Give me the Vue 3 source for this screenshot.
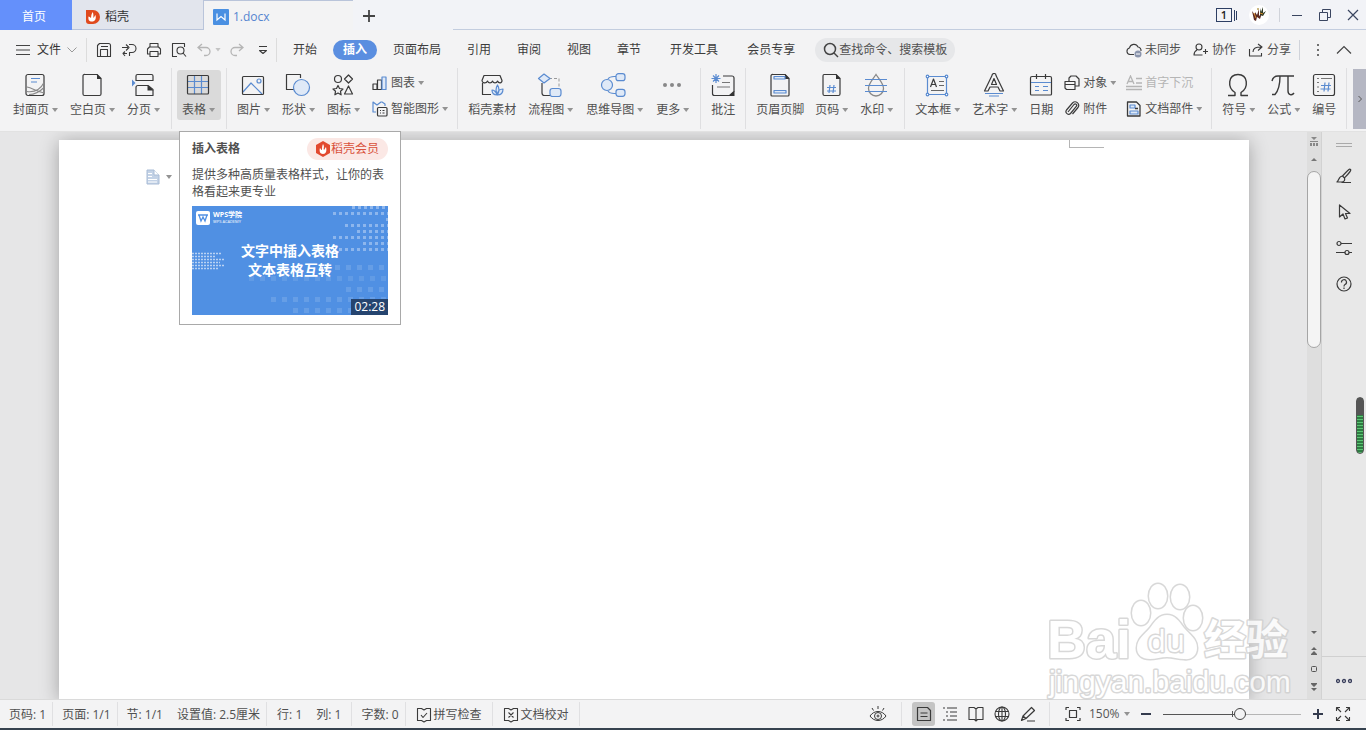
<template>
  <div class="app">
    <!-- Title bar with document tabs -->
    <header class="title-bar">
      <button class="tab tab-home">首页</button>
      <button class="tab tab-docer">
        <svg class="tab-icon" viewBox="0 0 16 16" v-html="icons.docer"></svg>
        <span>稻壳</span>
      </button>
      <button class="tab tab-doc">
        <svg class="tab-icon" viewBox="0 0 16 16" v-html="icons.writer"></svg>
        <span>1.docx</span>
      </button>
      <div class="new-tab">
        <button class="icon-btn" aria-label="新建">
          <svg width="16" height="16" viewBox="0 0 16 16"><path d="M8 2v12M2 8h12" stroke="#444" stroke-width="1.8" /></svg>
        </button>
      </div>
      <div class="window-tools">
        <svg width="22" height="16" viewBox="0 0 22 16" fill="none" stroke="#2d3e63">
          <rect x="0.5" y="1.5" width="15" height="13" />
          <path d="M18.500 3v11M20.500 4v9" />
          <text x="8" y="12" text-anchor="middle" class="count-text">1</text>
        </svg>
        <svg class="avatar" width="20" height="20" viewBox="0 0 20 20">
          <circle cx="10" cy="10" r="10" fill="#fff" />
          <path d="M3 6l3 4 0-3 2 3 2-6 0 7 3-3-2 6-3-2-1 4-2-1z" fill="#5b2c26" />
          <path d="M11 3l1 4 2-5 0 6 3-2-3 5-3-1z" fill="#2f3a24" />
          <path d="M5 8l2 5M11 8l3 1" stroke="#d88b2e" />
          <circle cx="9" cy="4" r="1" fill="#b8a05c" />
        </svg>
        <i class="divider"></i>
        <button class="icon-btn" aria-label="最小化"><svg width="12" height="12" viewBox="0 0 12 12" fill="none" stroke="#3a4560"><path d="M1 6.500h10" /></svg></button>
        <button class="icon-btn" aria-label="还原"><svg width="12" height="12" viewBox="0 0 12 12" fill="none" stroke="#3a4560"><path d="M0.500 3.500h8v8h-8zM3.500 3.500v-3h8v8h-3" /></svg></button>
        <button class="icon-btn" aria-label="关闭"><svg width="12" height="12" viewBox="0 0 12 12" fill="none" stroke="#3a4560" stroke-width="1.200"><path d="M1 1l10 10M11 1L1 11" /></svg></button>
      </div>
    </header>

    <!-- Menu row -->
    <nav class="menu-row">
      <button class="file-btn">
        <svg width="16" height="12" viewBox="0 0 16 12" stroke="#444"><path d="M1 1.500h14M1 6h14M1 10.500h14" /></svg>
        <span>文件</span>
        <svg width="10" height="6" viewBox="0 0 10 6" fill="none" stroke="#999"><path d="M0.500 0.500L5 5l4.500-4.500" /></svg>
      </button>
      <div class="quick-tools">
        <button v-for="q in quickTools" :key="q.icon" class="icon-btn" :aria-label="q.label">
          <svg class="ico16" viewBox="0 0 16 16" v-html="icons[q.icon]"></svg>
        </button>
        <button class="icon-btn undo" aria-label="撤销">
          <svg class="ico16" viewBox="0 0 16 16" v-html="icons.undo"></svg>
          <i class="caret light"></i>
        </button>
        <button class="icon-btn" aria-label="恢复">
          <svg class="ico16" viewBox="0 0 16 16" v-html="icons.redo"></svg>
        </button>
        <button class="icon-btn" aria-label="自定义快速访问工具栏">
          <svg class="ico16" viewBox="0 0 16 16" v-html="icons.custom"></svg>
        </button>
      </div>
      <div class="menu-tabs">
        <button
          v-for="m in menus"
          :key="m.name"
          class="menu-tab"
          :class="{ active: m.name === activeMenu, addon: m.addon }"
          @click="activeMenu = m.name"
        >{{ m.name }}</button>
      </div>
      <label class="search">
        <svg width="16" height="16" viewBox="0 0 16 16" fill="none" stroke="#444" stroke-width="1.500"><circle cx="7" cy="7" r="5.500" /><path d="M11 11l4 4" /></svg>
        <input type="text" placeholder="查找命令、搜索模板" aria-label="查找命令、搜索模板" />
      </label>
      <div class="menu-right">
        <div class="share-tools">
          <button v-for="s in shareTools" :key="s.label" class="share-btn">
            <svg class="ico16" viewBox="0 0 16 16" v-html="icons[s.icon]"></svg>
            <span>{{ s.label }}</span>
          </button>
        </div>
        <i class="divider tall"></i>
        <button class="icon-btn" aria-label="更多选项"><svg class="ico16" viewBox="0 0 16 16" fill="#444"><circle cx="8" cy="3" r="1" /><circle cx="8" cy="8" r="1" /><circle cx="8" cy="13" r="1" /></svg></button>
        <button class="icon-btn" aria-label="折叠功能区"><svg class="ico16" viewBox="0 0 16 16" fill="none" stroke="#444" stroke-width="1.200"><path d="M1 11.500L8 4.500l7 7" /></svg></button>
      </div>
    </nav>

    <!-- Ribbon -->
    <section class="ribbon">
      <div v-for="(group, gi) in ribbon" :key="gi" class="group" :class="{ roomy: group.roomy }">
        <template v-for="item in group.items" :key="item.label || item.rows[0].label">
          <div v-if="item.rows" class="small-col">
            <button v-for="row in item.rows" :key="row.label" class="small-btn" :disabled="row.disabled">
              <svg class="ico16" viewBox="0 0 16 16" v-html="icons[row.icon]"></svg>
              <span>{{ row.label }}</span>
              <i v-if="row.menu" class="caret"></i>
            </button>
          </div>
          <div v-else class="big-wrap">
            <button class="big-btn" :class="{ 'has-menu': item.menu, hover: item.tip }">
              <svg class="big-icon" viewBox="0 0 28 24" v-html="icons[item.icon]"></svg>
              <span class="big-label">{{ item.label }}<i v-if="item.menu" class="caret"></i></span>
            </button>
            <!-- Hover card of the table button -->
            <div v-if="item.tip" class="tip-card">
              <div class="tip-head">
                <strong>插入表格</strong>
                <span class="member">
                  <svg width="14" height="16" viewBox="0 0 14 16"><path d="M7 0l7 4v8l-7 4-7-4V4z" fill="#e2492f" /><path d="M7 3c2 3 0 4 1 6 1-1 1-2 2-3 1 4 0 7-3 7S3 10 4 7c1 1 1 2 2 2 0-2 0-4 1-6z" fill="#fff" /></svg>
                  稻壳会员
                </span>
              </div>
              <p>提供多种高质量表格样式，让你的表格看起来更专业</p>
              <div class="video">
                <svg class="video-dots" viewBox="0 0 196 109" v-html="videoDots"></svg>
                <div class="video-brand">
                  <svg width="14" height="14" viewBox="0 0 14 14"><rect width="14" height="14" rx="2" fill="#fff" /><path d="M2 4h10M3 4l2 6 2-4 2 4 2-6" fill="none" stroke="#5090e3" stroke-width="1.300" /></svg>
                  <div>
                    <b>WPS学院</b>
                    <small>WPS ACADEMY</small>
                  </div>
                </div>
                <div class="video-title">文字中插入表格<br />文本表格互转</div>
                <span class="video-time">02:28</span>
              </div>
            </div>
          </div>
        </template>
      </div>
      <button class="ribbon-next" aria-label="向右滚动">
        <svg width="6" height="8" viewBox="0 0 6 8" fill="none" stroke="#555"><path d="M1.500 1l3 3-3 3" /></svg>
      </button>
    </section>

    <!-- Workspace -->
    <main class="workspace">
      <div class="canvas">
        <div class="page">
          <button class="para-mark" aria-label="段落">
            <svg width="14" height="16" viewBox="0 0 14 16"><path d="M1 1h7l5 5v9H1z" fill="#c3d2e6" stroke="#a9bcd6" /><path d="M8 1v5h5" fill="#fff" stroke="#a9bcd6" /><path d="M2 4.500h4M2 7.500h4M2 10.500h9M2 13h9" stroke="#fff" /></svg>
            <i class="caret"></i>
          </button>
          <i class="corner"></i>
        </div>
      </div>
      <div class="scrollbar">
        <svg width="10" height="10" viewBox="0 0 10 10" fill="#888"><path d="M2 0h6L5 3zM1 6h2v3H1zM4 6h2v3H4zM7 6h2v3H7zM1 4h8v1H1z" /></svg>
        <svg width="8" height="8" viewBox="0 0 8 8" fill="#777"><path d="M1 6h6L4 3z" /></svg>
        <div class="track"><div class="thumb"></div></div>
        <div class="scroll-tools">
          <svg width="8" height="10" viewBox="0 0 8 10" fill="#666"><path d="M1 3h6L4 6z" /></svg>
          <svg width="8" height="10" viewBox="0 0 8 10" fill="#666"><path d="M1 4h6L4 1zM1 8h6L4 5zM1 8h6v1H1z" /></svg>
          <svg width="8" height="10" viewBox="0 0 8 10" fill="none" stroke="#555"><rect x="1.500" y="2.500" width="5" height="5" rx="1" /></svg>
          <svg width="8" height="10" viewBox="0 0 8 10" fill="#666"><path d="M1 2h6L4 5zM1 6h6L4 9zM1 1h6v1H1z" /></svg>
        </div>
      </div>
      <aside class="side-bar">
        <svg class="grip" width="16" height="6" viewBox="0 0 16 6" stroke="#aaa"><path d="M0 1.500h16M0 4.500h16" /></svg>
        <button v-for="s in sideTools" :key="s.icon" class="icon-btn" :aria-label="s.label">
          <svg class="ico16" viewBox="0 0 16 16" v-html="icons[s.icon]"></svg>
        </button>
        <button class="icon-btn side-more" aria-label="更多">
          <svg class="ico16" viewBox="0 0 16 16" fill="none" stroke="#3a3f5c" stroke-width="1.300"><circle cx="2" cy="8" r="1.500" /><circle cx="8" cy="8" r="1.500" /><circle cx="14" cy="8" r="1.500" /></svg>
        </button>
      </aside>
      <div class="meter"></div>
      <svg class="watermark" viewBox="0 0 250 120">
        <g class="wm">
          <ellipse cx="101" cy="34" rx="9" ry="12" />
          <ellipse cx="118" cy="17" rx="9" ry="12" />
          <ellipse cx="140" cy="18" rx="9" ry="12" />
          <ellipse cx="153" cy="39" rx="9" ry="12" />
          <path d="M127 36c8 0 12 6 17 13 6 7 13 11 13 20 0 8-6 12-13 11-6 0-11-2-17-2s-11 2-17 2c-8 0-13-4-13-11 0-9 7-13 13-20 5-7 9-13 17-13z" />
          <text x="7" y="79" class="wm-latin">Bai</text>
          <text x="107" y="73" class="wm-du">du</text>
          <text x="164" y="76" class="wm-cjk">经验</text>
          <text x="9" y="113" class="wm-url">jingyan.baidu.com</text>
        </g>
      </svg>
    </main>

    <!-- Status bar -->
    <footer class="status-bar">
      <div v-for="(cell, i) in statusCells" :key="i" class="cell" :class="{ wide: cell.wide }">
        <svg v-if="cell.icon" class="ico16" viewBox="0 0 16 16" v-html="icons[cell.icon]"></svg>
        <span v-for="t in cell.texts" :key="t">{{ t }}</span>
      </div>
      <div class="status-right">
        <button class="icon-btn eye" aria-label="护眼模式"><svg width="18" height="18" viewBox="0 0 18 18" v-html="icons.eye"></svg></button>
        <div class="views">
          <button
            v-for="v in views"
            :key="v.icon"
            class="view-btn"
            :class="{ active: v.icon === activeView }"
            :aria-label="v.label"
            @click="activeView = v.icon"
          >
            <svg class="ico16" viewBox="0 0 16 16" v-html="icons[v.icon]"></svg>
          </button>
        </div>
        <button class="icon-btn" aria-label="最佳显示比例"><svg class="ico16" viewBox="0 0 16 16" v-html="icons.fit"></svg></button>
        <label class="zoom-select">
          <select aria-label="显示比例"><option>150%</option></select>
          <i class="caret"></i>
        </label>
        <button class="icon-btn" aria-label="缩小"><svg width="12" height="12" viewBox="0 0 12 12" stroke="#333a4d" stroke-width="2"><path d="M1 6h10" /></svg></button>
        <input v-model="zoom" class="zoom-range" type="range" min="0" max="100" aria-label="缩放" />
        <button class="icon-btn" aria-label="放大"><svg width="12" height="12" viewBox="0 0 12 12" stroke="#333a4d" stroke-width="2"><path d="M1 6h10M6 1v10" /></svg></button>
        <button class="icon-btn full" aria-label="全屏显示"><svg class="ico16" viewBox="0 0 16 16" v-html="icons.full"></svg></button>
      </div>
    </footer>
  </div>
</template>

<script setup>
import { ref } from 'vue'

const activeMenu = ref('插入')
const activeView = ref('viewPage')
const zoom = ref(56)

const menus = [
  { name: '开始' },
  { name: '插入' },
  { name: '页面布局' },
  { name: '引用' },
  { name: '审阅' },
  { name: '视图' },
  { name: '章节' },
  { name: '开发工具', addon: true },
  { name: '会员专享', addon: true }
]

const quickTools = [
  { icon: 'save', label: '保存' },
  { icon: 'exportPdf', label: '输出为PDF' },
  { icon: 'print', label: '打印' },
  { icon: 'preview', label: '打印预览' }
]

const shareTools = [
  { icon: 'cloud', label: '未同步' },
  { icon: 'collab', label: '协作' },
  { icon: 'share', label: '分享' }
]

const sideTools = [
  { icon: 'brush', label: '样式' },
  { icon: 'pointer', label: '选择' },
  { icon: 'sliders', label: '属性' },
  { icon: 'help', label: '帮助' }
]

const views = [
  { icon: 'viewPage', label: '页面视图' },
  { icon: 'viewOutline', label: '大纲' },
  { icon: 'viewRead', label: '阅读版式' },
  { icon: 'viewWeb', label: 'Web版式' },
  { icon: 'viewPen', label: '写作模式' }
]

const statusCells = [
  { texts: ['页码: 1'] },
  { texts: ['页面: 1/1'] },
  { texts: ['节: 1/1', '设置值: 2.5厘米'] },
  { texts: ['行: 1', '列: 1'], wide: true },
  { texts: ['字数: 0'] },
  { icon: 'spell', texts: ['拼写检查'], wide: true },
  { icon: 'proof', texts: ['文档校对'], wide: true }
]

const ribbon = [
  {
    items: [
      { icon: 'cover', label: '封面页', menu: true },
      { icon: 'blank', label: '空白页', menu: true },
      { icon: 'pageBreak', label: '分页', menu: true }
    ]
  },
  { items: [{ icon: 'table', label: '表格', menu: true, tip: true }] },
  {
    items: [
      { icon: 'picture', label: '图片', menu: true },
      { icon: 'shapes', label: '形状', menu: true },
      { icon: 'iconSet', label: '图标', menu: true },
      {
        rows: [
          { icon: 'chart', label: '图表', menu: true },
          { icon: 'smart', label: '智能图形', menu: true }
        ]
      }
    ]
  },
  {
    roomy: true,
    items: [
      { icon: 'store', label: '稻壳素材' },
      { icon: 'flow', label: '流程图', menu: true },
      { icon: 'mind', label: '思维导图', menu: true },
      { icon: 'more', label: '更多', menu: true }
    ]
  },
  { items: [{ icon: 'comment', label: '批注' }] },
  {
    items: [
      { icon: 'headerFooter', label: '页眉页脚' },
      { icon: 'pageNo', label: '页码', menu: true },
      { icon: 'water', label: '水印', menu: true }
    ]
  },
  {
    items: [
      { icon: 'textBox', label: '文本框', menu: true },
      { icon: 'wordArt', label: '艺术字', menu: true },
      { icon: 'date', label: '日期' },
      {
        rows: [
          { icon: 'object', label: '对象', menu: true },
          { icon: 'attach', label: '附件' }
        ]
      },
      {
        rows: [
          { icon: 'dropCap', label: '首字下沉', disabled: true },
          { icon: 'parts', label: '文档部件', menu: true }
        ]
      }
    ]
  },
  {
    items: [
      { icon: 'symbol', label: '符号', menu: true },
      { icon: 'formula', label: '公式', menu: true },
      { icon: 'numbering', label: '编号' }
    ]
  }
]

// wrappers for line icons: dark strokes (d) and blue strokes (b)
const d = (s, w = 1.2) => `<g fill="none" stroke="#3a3a3a" stroke-width="${w}" stroke-linejoin="round">${s}</g>`
const b = (s, fill = 'none') => `<g fill="${fill}" stroke="#5a8bd0" stroke-width="1.2" stroke-linejoin="round">${s}</g>`
const g = s => `<g fill="none" stroke="#b5b5b5" stroke-width="1.3">${s}</g>`

const icons = {
  docer: '<path d="M1 1h7a7 7 0 0 1 0 14H4a3 3 0 0 1-3-3z" fill="#e04a1e"/><path d="M7.500 3c1.500 2 .500 4 1 6 1-1 1-2 2-3 1 4-.500 6.500-3.500 6.500S3 10.500 3.500 7.500c1 0 1.500 1 2.500 1.500 0-2 .500-4 1.500-6z" fill="#fff"/>',
  writer: '<rect width="16" height="16" rx="1" fill="#4a90e2"/><path d="M4 4.500V11l4-3.500 4 3.500V4.500" fill="none" stroke="#fff" stroke-width="1.2"/>',

  save: d('<path d="M1.500 3.500l2-2h9a2 2 0 0 1 2 2v11h-13zM4.500 14.500v-7h7v7M5 4.500h7" />', 1.1),
  exportPdf: d('<path d="M1 5.500h6M5 2.500l3 3-3 3M8 2.500h3a4 4 0 0 1 0 8H8.500V14M4 9.500l-2 2 2 2.500M2 11.500h4" />', 1.1),
  print: d('<path d="M4 5V1.500h8V5M4 12H1.500V7l2-2h9l2 2v5H12M4 9.500h8v5H4z" />', 1.1),
  preview: d('<path d="M6 14.500H1.500v-13h12V5" /><circle cx="9.500" cy="8.500" r="3.500" /><path d="M12 11l3 3.500" />', 1.1),
  undo: g('<path d="M6 2L2 5.500 6 9M2 5.500h8a4 4 0 0 1 0 8H8" />'),
  redo: g('<path d="M10 2l4 3.500L10 9M14 5.500H6a4 4 0 0 0 0 8h2" />'),
  custom: d('<path d="M5 4.500h8M5.500 8.500l3.500 3 3.500-3z" />', 1.1),

  cloud: d('<path d="M8 12.500H4a3.300 3.300 0 0 1-.500-6.500 4.500 4.500 0 0 1 8.500-1 3.500 3.500 0 0 1 3 4" />', 1.1) + '<circle cx="12" cy="12" r="3.500" fill="#8b95ad"/><path d="M10 12h4" stroke="#fff"/>',
  collab: d('<circle cx="6" cy="5" r="3" /><path d="M4 8c-2 1-3 2-3 5h8.500M12.500 7v5M10 9.500h5" />', 1.1),
  share: d('<path d="M1.500 7v7h12v-3M5 10c0-4 3-5 8-5M10 2l4 3-4 3.500" />', 1.1),

  cover: d('<rect x="5" y="1.500" width="18" height="21" rx="2" />') + b('<path d="M10 5.500h9M10 9h6" />') + '<path d="M6 14c5 1 9 4 17 6M6 18.500c8 1 14-3 17-9M8 21.500c6 0 11-3 15-7" fill="none" stroke="#888" stroke-width="1.100"/>',
  blank: d('<path d="M7 1.500h12l4 4V21a1.500 1.500 0 0 1-1.500 1.500h-15A1.500 1.500 0 0 1 5 21V3a1.500 1.500 0 0 1 2-1.500z" />') + '<path d="M19 1l4.500 5H19z" fill="#333"/>',
  pageBreak: d('<path d="M7 7.500V3a1.500 1.500 0 0 1 1.500-1.500h14A1.500 1.500 0 0 1 24 3v4.500zM7 22.500v-8a2 2 0 0 1 2-2h10l5 4v6z" />') + '<path d="M18.500 12l6 5.500h-6z" fill="#333"/><path d="M3 6.500v7l3.500-3.500z" fill="#5a8bd0"/>',
  table: b('<path d="M10.500 3v18M17.500 3v18M4 8.500h20M4 14.500h20" />') + d('<rect x="3.500" y="2.500" width="21" height="18.500" rx="1" />'),
  picture: b('<path d="M4 19l8-9 11 11" /><circle cx="20" cy="8" r="2" />') + d('<rect x="3.500" y="3.500" width="21" height="18" rx="1" />'),
  shapes: d('<path d="M10 16.500H2.500v-15h14V5" />') + b('<circle cx="17.500" cy="14.500" r="8" />', '#dfe9f7'),
  iconSet: d('<circle cx="9" cy="6" r="3.500" /><path d="M19.500 2l4 4-4 4-4-4zM9 12.500l1.500 3 3.500.500-2.500 2.300.600 3.500L9 20l-3.100 1.800.600-3.500L4 16l3.500-.500zM19.500 13l4 8h-8z" />'),
  store: d('<path d="M13 21.500H4.500V10M6 2.500h16l2 5c0 3-3.500 3-4.500.500-1 2.500-4 2.500-5 0-1 2.500-4 2.500-5 0-1.500 3-5.500 2-5.500-.500z" />') + b('<path d="M19.500 22c-2-4-2-7 0-10 2 3 2 6 0 10zM19 22c-3 0-5-2-5-5 2 0 4 2 5 5zM19.500 22c0-4 2-6 5.500-6 0 4-2.500 6-5.500 6z" />', '#dfe9f7'),
  flow: d('<path d="M6 10v10a2.500 2.500 0 0 0 2.500 2.500H14" />') + '<path d="M13 5.500h10v8" fill="none" stroke="#999" stroke-dasharray="3 2"/>' + b('<path d="M8 1l6 4.500L8 10 2.500 5.500z" /><rect x="14" y="15.500" width="11" height="8" rx="2.500" />', '#dfe9f7'),
  mind: b('<path d="M8 6c2-3 4-2.500 8-2.500M8 18c2 3 4 2.500 8 2.500" />') + b('<circle cx="7" cy="12" r="5.500" /><rect x="16" y="0.700" width="9" height="7" rx="2.500" /><rect x="16" y="16.300" width="9" height="7" rx="2.500" />', '#dfe9f7'),
  more: '<g fill="#888"><circle cx="7" cy="12" r="2"/><circle cx="14" cy="12" r="2"/><circle cx="21" cy="12" r="2"/></g>',
  comment: d('<path d="M3.500 12v8.500a2 2 0 0 0 2 2h15l4.500-4V5a2 2 0 0 0-2-2h-9" />') + '<path d="M25.500 18v5H20z" fill="#333"/><path d="M13 9.500h8M8 14h13" stroke="#777" stroke-width="1.2"/>' + b('<path d="M7 1v9M2.500 5.500h9M4 2.500l6 6M10 2.500l-6 6" />'),
  headerFooter: d('<path d="M7 1.500h12l4 4V22a1 1 0 0 1-1 1H6a1 1 0 0 1-1-1V3a1.500 1.500 0 0 1 2-1.500z" />') + '<path d="M19 1l4.500 5H19z" fill="#333"/>' + b('<path d="M8 3.500h11V6H8zM8 17.500h12V20H8z" />', '#dfe9f7'),
  pageNo: d('<path d="M7 1.500h12l4 4V21a1.500 1.500 0 0 1-1.500 1.500h-14A1.500 1.500 0 0 1 6 21V3a1.500 1.500 0 0 1 1-1.500z" />') + '<path d="M19 1l4.500 5H19z" fill="#333"/>' + b('<path d="M13 12l-1 8M17 12l-1 8M10 14.500h9M10 18h9" />'),
  water: '<path d="M14 1.500c4 6 7.500 9 7.500 14a7.500 7.500 0 0 1-15 0c0-5 3.500-8 7.500-14z" fill="none" stroke="#888" stroke-width="1.3"/>' + b('<path d="M3 6.500h22M3 12.500h22M3 18.500h22" />'),
  textBox: b('<path d="M4.500 3.500h19v18h-19z" />') + b('<circle cx="4.500" cy="3.500" r="1.300"/><circle cx="23.500" cy="3.500" r="1.300"/><circle cx="4.500" cy="21.500" r="1.300"/><circle cx="23.500" cy="21.500" r="1.300"/>', '#fff') + d('<path d="M7.500 14l3-8 3 8M8.500 11.500h4" />') + '<path d="M16 8.500h5M16 12.500h5M8 17.500h13" stroke="#666"/>',
  wordArt: d('<path d="M4.500 18l7.500-15.500a2 2 0 0 1 4 0L23.500 18h-3.500l-2-4h-8l-2 4zM11.500 11.500h5l-2.500-6z" />') + b('<path d="M5 20.500h18M9 23h10" />'),
  date: d('<path d="M5 3.500h18a1.500 1.500 0 0 1 1.500 1.500v16a1 1 0 0 1-1 1h-19a1 1 0 0 1-1-1V5A1.500 1.500 0 0 1 5 3.500zM9.500 1v5M18.500 1v5" />') + b('<path d="M4 9.500h20M8 13.500h4M16 13.500h5M8 17.500h4M16 17.500h5" />'),
  symbol: d('<path d="M4 22.500h7v-3c-8-5-7-18 3-18s11 13 3 18v3h7" />', 1.4),
  formula: d('<path d="M3 8c1-4 3-5 6-5h16M11 3c0 8-1 14-5 18.500H3M19 3v15c0 4 4 5 6 2" />', 1.4),
  numbering: d('<rect x="3.500" y="1.500" width="21" height="21" rx="2" />') + '<path d="M7 5.500h2M11 5.500h11M7 9.500h2M7 14h2M7 18.500h2" stroke="#777" stroke-width="1.2"/>' + b('<path d="M15 9.500l-1 9M19 9.500l-1 9M11 12.500h10M10.500 16h10" />'),

  chart: d('<path d="M1 14.500V9h4v5.500zM5.500 14.500V5h4v9.500z" />', 1.2) + b('<path d="M10 14.500V2h4v12.500z" />', '#dfe9f7'),
  smart: b('<path d="M4 11H1V1l4 3 4-3h1l3 2v2" />') + d('<rect x="5.500" y="6.500" width="9.500" height="8.500" rx="1" /><path d="M8 9.500h1M10.500 9.500h2M8 12h1M10.500 12h2" />', 1.2),
  object: d('<path d="M5 6V3l2-2h5l3 3v7h-4" /><path d="M1 6.500h10v8H2.500L1 13zM1 9.500h10" />', 1.2),
  attach: d('<path d="M4 11l6-7.500c1.500-1.500 3.500 0 2.500 1.700l-6 7.300c-2 2-6-.500-4-3.500l6-7c3-3 8 .500 5.500 4.500l-5.500 6.500" />', 1.2),
  dropCap: g('<path d="M1 9l3.500-8L8 9M2 6.500h5M10 3.500h6M10 8h6M0 11.500h16M0 14.500h16" />'),
  parts: b('<path d="M4 4h5v3H4zM4 10h8v3H4z" />', '#dfe9f7') + d('<path d="M1.500 1h9l3.500 3.500v10.500H1.500zM9 7.500h3" />', 1.3),

  brush: d('<path d="M14.500 1.500c-1-1-2 0-8 6.500l2 2C14 4 15.500 2.500 14.500 1.500zM6.500 8C3 8 3 12 1 14h4.500c3 0 3.500-2 3-4M5.500 14.500H15" />', 1.2),
  pointer: d('<path d="M3.500 1v12l3.500-3 2 5 2.500-1-2-4.500h4.500z" />', 1.2),
  sliders: d('<circle cx="3" cy="3.500" r="2" /><path d="M5 3.500h11M0 12.500h9M13 12.500h3" /><circle cx="11" cy="12.500" r="2" />', 1.2),
  help: d('<circle cx="8" cy="8" r="7" /><path d="M5.500 6.500a2.500 2.500 0 1 1 3.500 2c-1 .500-1 1-1 2M8 11.500V13" />', 1.2),

  spell: d('<path d="M1.500 1.500h4L8 3l2.500-1.500h4v12h-4L8 15l-2.500-1.500h-4zM5 8l2 2.500L11 6" />', 1.1),
  proof: d('<path d="M1.500 1.500h4L8 3l2.500-1.500h4v12h-4L8 15l-2.500-1.500h-4zM5.500 5.500l5 5M10.500 5.500l-5 5" />', 1.1),
  eye: d('<path d="M1 11c4-6 12-6 16 0-4 6-12 6-16 0z" /><circle cx="9" cy="11" r="3.500" /><circle cx="9" cy="11" r="1" /><path d="M9 1v3M3 3l1.500 2.500M15 3l-1.500 2.500" />', 1),
  viewPage: d('<path d="M1.500 1.500h10l3 3v10h-13zM4.500 7h7M4.500 10.500h7" />', 1.2),
  viewOutline: d('<path d="M1 2h2M5 2h10M4 6h2M8 6h7M4 10h2M8 10h7M1 14h2M5 14h10" />', 1.2),
  viewRead: d('<path d="M1 1.500h5L8 3l2-1.500h5v12h-5.500L8 15l-1.500-1.500H1zM8 3v12" />', 1.1),
  viewWeb: d('<circle cx="8" cy="8" r="7" /><ellipse cx="8" cy="8" rx="3.500" ry="7" /><path d="M8 1v14M1.500 5.500h13M1.500 10.500h13" />', 1.1),
  viewPen: d('<path d="M3 10l8.500-8.500 3 3L6 12.500l-4.500 2zM3 10l3 2.500M7 15h8" />', 1.2),
  fit: d('<path d="M1 4V1.500h3M12 1.500h3V4M15 12v2.500h-3M4 14.500H1V12" /><rect x="4.500" y="4.500" width="7" height="7" />', 1.2),
  full: d('<path d="M1.500 5V1.500H5M1.500 1.500L6 6M11 1.500h3.500V5M14.500 1.500L10 6M14.500 11v3.500H11M14.500 14.500L10 10M5 14.500H1.500V11M1.500 14.500L6 10" />', 1.1)
}

// dot pattern of the video cover: rows of [x from, x to, y, step, size, opacity]
const dotRows = [
  [160, 196, 0, 6, 3, 0.35],
  [141, 196, 6, 6, 3, 0.35],
  [194, 196, 12, 6, 3, 0.35],
  [153, 196, 18, 6, 3, 0.35],
  [165, 196, 24, 6, 3, 0.35],
  [141, 196, 30, 6, 3, 0.35],
  [171, 196, 36, 6, 3, 0.35],
  [147, 196, 42, 6, 3, 0.35],
  [132, 196, 59, 11, 5, 0.13],
  [57, 196, 70, 11, 5, 0.1],
  [154, 196, 81, 11, 5, 0.13],
  [79, 196, 91, 11, 5, 0.13],
  [101, 160, 102, 11, 5, 0.13]
]
let videoDots = ''
dotRows.forEach(([from, to, y, step, size, op]) => {
  for (let x = from; x < to; x += step) {
    videoDots += `<rect x="${x}" y="${y}" width="${size}" height="${size}" fill="#fff" opacity="${op}"/>`
  }
})
;[30, 24, 32, 28, 32, 26].forEach((w, i) => {
  videoDots += `<path d="M0 ${47.5 + i * 3}h${w}" stroke="#fff" stroke-width="1.5" stroke-dasharray="2 1" opacity="0.6"/>`
})
</script>

<style>
html,
body {
  margin: 0;
  overflow: hidden;
}
</style>

<style scoped>
.app {
  height: 100vh;
  display: flex;
  flex-direction: column;
  background: #f3f3f4;
  color: #505050;
  font-family: 'Open Sans', 'Noto Sans CJK SC', sans-serif;
  font-size: 12px;
  line-height: 20px;
}
.app * {
  box-sizing: border-box;
}
button,
input,
select {
  padding: 0;
  border: none;
  background: none;
  color: inherit;
  font: inherit;
  white-space: nowrap;
}
svg {
  display: block;
  flex: none;
}
.ico16 {
  width: 16px;
  height: 16px;
}
.icon-btn {
  display: flex;
  align-items: center;
  justify-content: center;
}
.caret {
  display: inline-block;
  flex: none;
  width: 6px;
  height: 4px;
  margin-right: -1px;
  background: #939393;
  clip-path: polygon(0 0, 100% 0, 50% 100%);
}
.caret.light {
  background: #c4c4c4;
}
.divider {
  width: 1px;
  height: 14px;
  background: #d0d3da;
}
.divider.tall {
  height: 20px;
}

/* ==== Title bar ==== */
.title-bar {
  display: flex;
  flex: none;
  height: 30px;
  background: #f2f3f7;
}
.tab {
  display: flex;
  align-items: center;
  gap: 4px;
  border-bottom: 1px solid #b9c4da;
}
.tab-icon {
  width: 16px;
  height: 16px;
}
.tab-home {
  justify-content: center;
  width: 72px;
  padding: 4px 4px 0 0;
  color: #fff;
  background: #6490fb;
  border-bottom-color: #6490fb;
}
.tab-docer {
  width: 131px;
  padding: 4px 0 0 13px;
  color: #333;
  background: #e2e5ed;
}
.tab-doc {
  width: 150px;
  padding: 3px 0 0 9px;
  color: #5585d0;
  background: #f3f3f4;
  border: 1px solid #b9c4da;
  border-width: 1px 0 0 1px;
}
.new-tab {
  display: flex;
  align-items: center;
  width: 100px;
  padding: 2px 0 0 8px;
}
.window-tools {
  flex: 1;
  display: flex;
  align-items: center;
  justify-content: flex-end;
  gap: 16px;
  padding-right: 7px;
  border-bottom: 1px solid #c3cddf;
}
.count-text {
  font-size: 11px;
  font-weight: 600;
  fill: #222;
  stroke: none;
}
.avatar {
  margin-left: -5px;
}
.window-tools .divider {
  margin: 0 -5px 0 -6px;
}

/* ==== Menu row ==== */
.menu-row {
  display: flex;
  flex: none;
  align-items: center;
  height: 38px;
  padding-top: 1px;
}
.file-btn {
  display: flex;
  align-items: center;
  gap: 6px;
  height: 24px;
  width: 87px;
  padding-left: 15px;
  border-right: 1px solid #dcdcdc;
  color: #333;
}
.quick-tools {
  display: flex;
  align-items: center;
  gap: 9px;
  height: 24px;
  width: 190px;
  padding-left: 9px;
  border-right: 1px solid #dcdcdc;
}
.undo {
  gap: 3px;
}
.menu-tabs {
  display: flex;
  gap: 6px;
  padding-left: 6px;
}
.menu-tab {
  height: 20px;
  padding: 0 10px;
  border-radius: 10px;
  color: #3c3c3c;
}
.menu-tab.addon {
  margin-left: 3px;
}
.menu-tab.active {
  color: #fff;
  font-weight: 700;
  background: #5a8ee0;
}
.search {
  display: flex;
  align-items: center;
  width: 140px;
  height: 24px;
  margin-left: 10px;
  padding-left: 8px;
  border-radius: 12px;
  background: #e6e7e9;
}
.search input {
  flex: 1;
  min-width: 0;
  outline: none;
}
.search input::placeholder {
  color: #505050;
  opacity: 1;
}
.menu-right {
  display: flex;
  align-items: center;
  gap: 10px;
  margin-left: auto;
  padding-right: 14px;
}
.share-tools {
  display: flex;
  gap: 12px;
  margin-right: -2px;
}
.share-btn {
  display: flex;
  align-items: center;
  gap: 3px;
}

/* ==== Ribbon ==== */
.ribbon {
  display: flex;
  flex: none;
  height: 64px;
  padding: 0 0 2px 3px;
  border-bottom: 1px solid #e2e2e2;
}
.group {
  display: flex;
  gap: 1px;
  padding: 2px 5px 0;
  border-right: 1px solid #dfdfe1;
}
.group.roomy {
  gap: 2px;
}
.big-wrap {
  position: relative;
}
.big-btn {
  display: flex;
  flex-direction: column;
  align-items: center;
  gap: 3px;
  height: 50px;
  padding: 3px 5px 0;
  border-radius: 3px;
}
.big-btn.has-menu {
  padding-right: 7px;
}
.big-btn.hover {
  background: #dadada;
}
.big-icon {
  width: 28px;
  height: 24px;
  margin: 0 -4px;
}
.big-label {
  display: flex;
  align-items: center;
  gap: 3px;
}
.small-col {
  display: flex;
  flex-direction: column;
  gap: 6px;
  padding: 3px 5px 0;
}
.small-btn {
  display: flex;
  align-items: center;
  gap: 3px;
  height: 20px;
}
.small-btn:disabled {
  color: #b5b5b5;
}
.ribbon-next {
  display: flex;
  align-items: center;
  justify-content: center;
  width: 13px;
  margin: 1px 0 0 auto;
  background: #b5b7c3;
}

/* ==== Hover card ==== */
.tip-card {
  position: absolute;
  z-index: 10;
  top: 61px;
  left: 2px;
  width: 222px;
  padding: 6px 12px 9px;
  background: #fff;
  border: 1px solid #a9a9a9;
}
.tip-head {
  display: flex;
  align-items: center;
  justify-content: space-between;
}
.member {
  display: flex;
  align-items: center;
  gap: 1px;
  height: 22px;
  padding: 0 9px;
  border-radius: 11px;
  color: #d9523c;
  background: #fbe8e5;
}
.tip-card p {
  margin: 6px 0;
  line-height: 17px;
}
.video {
  position: relative;
  height: 109px;
  color: #fff;
  background: #5090e3;
}
.video-dots {
  position: absolute;
  width: 100%;
  height: 100%;
}
.video-brand {
  display: flex;
  gap: 3px;
  padding: 5px 0 0 4px;
  line-height: 8px;
}
.video-brand b {
  display: block;
  font-size: 7px;
}
.video-brand small {
  display: block;
  font-size: 4px;
  line-height: 5px;
}
.video-title {
  margin-top: 16px;
  font-size: 14px;
  font-weight: 700;
  line-height: 19px;
  text-align: center;
}
.video-time {
  position: absolute;
  right: 0;
  bottom: 0;
  padding: 0 3px;
  line-height: 16px;
  background: #25446f;
}

/* ==== Workspace ==== */
.workspace {
  position: relative;
  display: flex;
  flex: 1;
  min-height: 0;
  background: #e6e6e7;
}
.canvas {
  flex: 1;
  display: flex;
  padding: 8px 58px 0 59px;
  overflow: hidden;
}
.page {
  position: relative;
  flex: 1;
  background: #fff;
  box-shadow: 0 2px 18px rgba(0, 0, 0, 0.3);
}
.para-mark {
  display: flex;
  align-items: center;
  gap: 6px;
  margin: 29px 0 0 87px;
}
.corner {
  position: absolute;
  top: 0;
  right: 145px;
  width: 35px;
  height: 8px;
  border-left: 1px solid #b5b5b5;
  border-bottom: 1px solid #b5b5b5;
}
.scrollbar {
  display: flex;
  flex-direction: column;
  align-items: center;
  gap: 8px;
  width: 14px;
  padding: 5px 0 7px;
  background: #dedede;
}
.track {
  flex: 1;
}
.thumb {
  width: 14px;
  height: 177px;
  border: 1px solid #a5a5a5;
  border-radius: 7px;
  background: #f4f4f4;
}
.scroll-tools {
  display: flex;
  flex-direction: column;
  gap: 8px;
}
.side-bar {
  display: flex;
  flex-direction: column;
  align-items: center;
  gap: 20px;
  width: 45px;
  padding-top: 10px;
  border-left: 1px solid #d2d2d2;
  background: #e8e8e8;
}
.side-more {
  width: 100%;
  height: 43px;
  margin-top: auto;
  padding-top: 5px;
  border-top: 1px solid #d0d0d0;
}
.meter {
  position: absolute;
  top: 265px;
  right: 2px;
  width: 8px;
  height: 57px;
  border: 1px solid #555;
  border-radius: 4px;
  background: linear-gradient(#555 30%, transparent 30%), repeating-linear-gradient(#5cc574 0 1px, #2f7d43 1px 3px);
}
.watermark {
  position: absolute;
  right: 76px;
  bottom: 0;
  width: 250px;
  height: 120px;
  overflow: visible;
}
.wm {
  fill: #fff;
  stroke: #cfcfcf;
  stroke-width: 3px;
  stroke-linejoin: round;
  paint-order: stroke;
  opacity: 0.8;
}
.wm-latin {
  font: 700 54px 'Liberation Sans', sans-serif;
}
.wm-du {
  font: 400 31px 'Open Sans', sans-serif;
}
.wm-cjk {
  font: 700 42px 'Noto Sans CJK SC', sans-serif;
}
.wm-url {
  font: 400 30px 'Liberation Sans', sans-serif;
}

/* ==== Status bar ==== */
.status-bar {
  display: flex;
  flex: none;
  align-items: center;
  height: 31px;
  border-top: 1px solid #dadada;
  border-bottom: 2px solid #36424f;
}
.cell {
  display: flex;
  align-items: center;
  gap: 14px;
  height: 24px;
  padding: 1px 6px 0 9px;
  border-right: 1px solid #e0e0e2;
  white-space: nowrap;
}
.cell.wide {
  padding: 1px 10px 0;
}
.cell .ico16 {
  margin-right: -12px;
}
.status-right {
  display: flex;
  align-items: center;
  gap: 11px;
  margin-left: auto;
  padding-right: 15px;
}
.eye {
  margin-right: 3px;
}
.views {
  display: flex;
  gap: 3px;
  margin-right: 4px;
  padding: 0 10px;
  border: 1px solid #e0e0e2;
  border-width: 0 1px;
}
.view-btn {
  display: flex;
  align-items: center;
  justify-content: center;
  width: 23px;
  height: 24px;
  border-radius: 3px;
}
.view-btn.active {
  background: #c4c4c4;
}
.zoom-select {
  display: flex;
  align-items: center;
  gap: 4px;
  margin-left: -3px;
}
.zoom-select select {
  appearance: none;
  color: #555;
}
.zoom-range {
  appearance: none;
  width: 138px;
  height: 12px;
  margin: 0;
  background:
    linear-gradient(#555, #555) center / 1px 6px no-repeat,
    linear-gradient(90deg, #555 57%, #b5b5b5 57%) center / 100% 1px no-repeat;
}
.zoom-range::-webkit-slider-thumb {
  appearance: none;
  width: 12px;
  height: 12px;
  border: 1px solid #444;
  border-radius: 50%;
  background: #f3f3f4;
}
</style>
